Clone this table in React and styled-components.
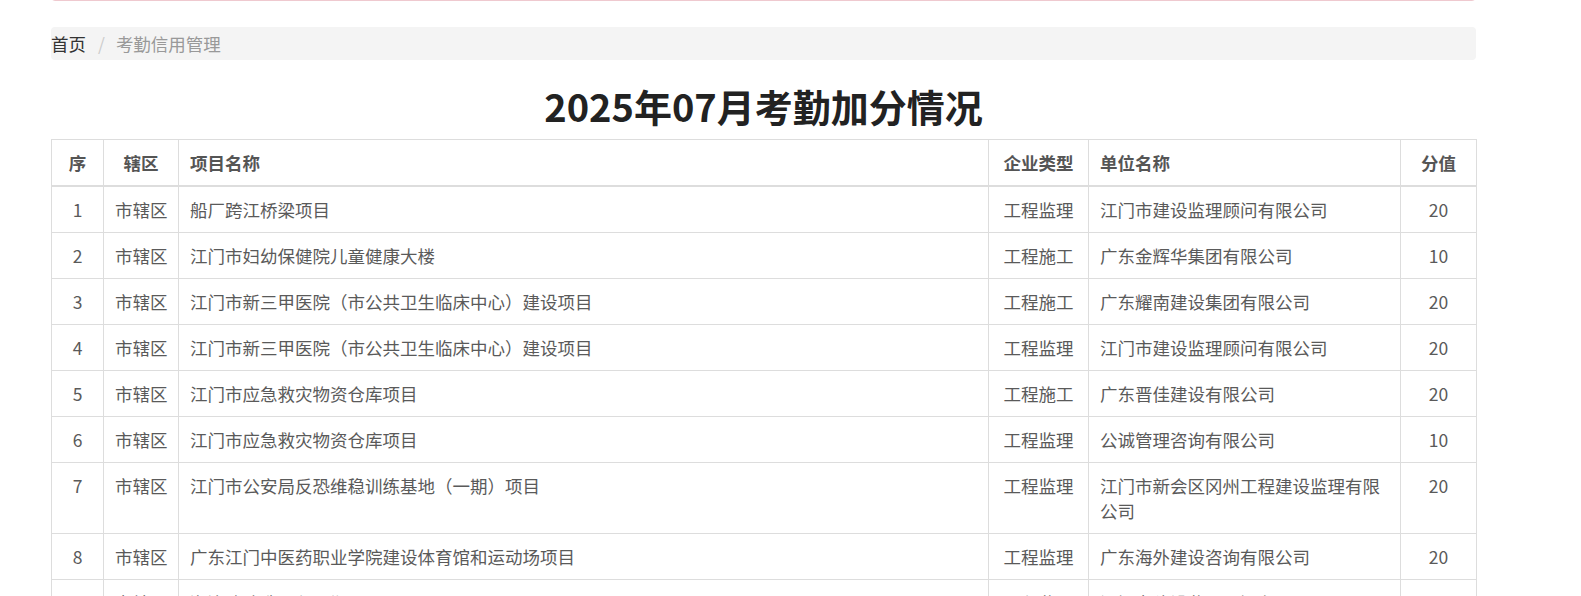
import React from 'react';
import styled, { createGlobalStyle } from 'styled-components';

const GlobalStyle = createGlobalStyle`
  body {
    margin: 0;
    background: #fff;
    font-family: "Noto Sans CJK SC", "Liberation Sans", sans-serif;
    color: #555;
  }
`;

const Page = styled.div`
  width: 1425px;
  margin-left: 51px;
`;

// bottom edge of an alert box that is scrolled out of view
const AlertEdge = styled.div`
  height: 48px;
  margin-top: -49px;
  border: 1px solid #efc9cf;
  border-radius: 4px;
  background: #fdf3f4;
`;

const Breadcrumb = styled.ol`
  display: flex;
  align-items: center;
  list-style: none;
  margin: 26px 0 0;
  padding: 0;
  height: 33px;
  background: #f4f4f4;
  border-radius: 4px;
  font-size: 17.5px;
  line-height: 33px;
`;

const Crumb = styled.li`
  color: ${p => (p.active ? '#999' : '#333')};
`;

const Sep = styled.li`
  color: #ccc;
  padding: 0 11px 0 12px;
`;

const Title = styled.h2`
  margin: 25px 0 12px;
  text-align: center;
  font-size: 38px;
  line-height: 42px;
  font-weight: 700;
  color: #222;
`;

const Table = styled.table`
  width: 1425px;
  table-layout: fixed;
  border-collapse: collapse;
  font-size: 17.5px;
  line-height: 25px;
`;

const Th = styled.th`
  border: 1px solid #ddd;
  border-bottom: 2px solid #ddd;
  padding: 10px 11px;
  font-weight: 700;
  color: #555;
  text-align: ${p => (p.center ? 'center' : 'left')};
  white-space: ${p => (p.center ? 'nowrap' : 'normal')};
  vertical-align: top;
`;

const Td = styled.td`
  border: 1px solid #ddd;
  padding: 10px 11px;
  color: #5a5a5a;
  text-align: ${p => (p.center ? 'center' : 'left')};
  white-space: ${p => (p.center ? 'nowrap' : 'normal')};
  vertical-align: top;
`;

const rows = [
  ['市辖区', '船厂跨江桥梁项目', '工程监理', '江门市建设监理顾问有限公司', 20],
  ['市辖区', '江门市妇幼保健院儿童健康大楼', '工程施工', '广东金辉华集团有限公司', 10],
  ['市辖区', '江门市新三甲医院（市公共卫生临床中心）建设项目', '工程施工', '广东耀南建设集团有限公司', 20],
  ['市辖区', '江门市新三甲医院（市公共卫生临床中心）建设项目', '工程监理', '江门市建设监理顾问有限公司', 20],
  ['市辖区', '江门市应急救灾物资仓库项目', '工程施工', '广东晋佳建设有限公司', 20],
  ['市辖区', '江门市应急救灾物资仓库项目', '工程监理', '公诚管理咨询有限公司', 10],
  ['市辖区', '江门市公安局反恐维稳训练基地（一期）项目', '工程监理', '江门市新会区冈州工程建设监理有限公司', 20],
  ['市辖区', '广东江门中医药职业学院建设体育馆和运动场项目', '工程监理', '广东海外建设咨询有限公司', 20],
  ['市辖区', '潮连路改造工程一期', '工程监理', '江门市建设监理顾问有限公司', 20],
];

export default function App() {
  return (
    <>
      <GlobalStyle />
      <Page>
        <AlertEdge />
        <Breadcrumb>
          <Crumb>首页</Crumb>
          <Sep>/</Sep>
          <Crumb active>考勤信用管理</Crumb>
        </Breadcrumb>
        <Title>2025年07月考勤加分情况</Title>
        <Table>
          <colgroup>
            <col style={{ width: 52 }} />
            <col style={{ width: 75 }} />
            <col style={{ width: 810 }} />
            <col style={{ width: 100 }} />
            <col style={{ width: 312 }} />
            <col style={{ width: 76 }} />
          </colgroup>
          <thead>
            <tr>
              <Th center>序</Th>
              <Th center>辖区</Th>
              <Th>项目名称</Th>
              <Th center>企业类型</Th>
              <Th>单位名称</Th>
              <Th center>分值</Th>
            </tr>
          </thead>
          <tbody>
            {rows.map((r, i) => (
              <tr key={i}>
                <Td center>{i + 1}</Td>
                <Td center>{r[0]}</Td>
                <Td>{r[1]}</Td>
                <Td center>{r[2]}</Td>
                <Td>{r[3]}</Td>
                <Td center>{r[4]}</Td>
              </tr>
            ))}
          </tbody>
        </Table>
      </Page>
    </>
  );
}
